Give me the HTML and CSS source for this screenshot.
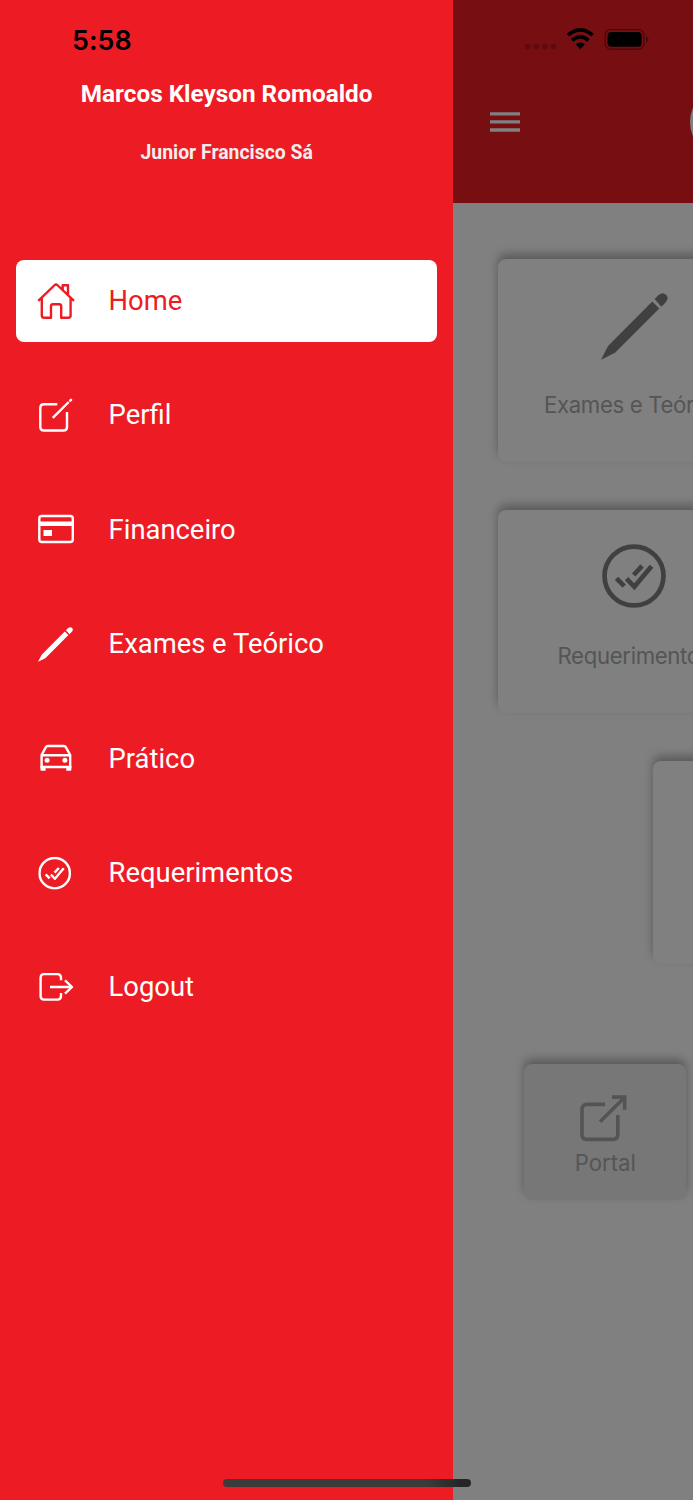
FILE: index.html
```html
<!DOCTYPE html>
<html lang="pt-BR">
<head>
<meta charset="utf-8">
<title>Menu</title>
<link rel="stylesheet" href="styles.css">
</head>
<body>
<svg class="defs" aria-hidden="true">
  <symbol id="pencil" viewBox="0 0 200 200"><path fill="currentColor" d="M0 199 21 158 153 25 174 46 42 178ZM160 18 172 6Q184-4 195 6 204 17 192 29L180 41Z"/></symbol>
  <symbol id="checks" viewBox="0 0 190 190"><g fill="none" stroke="currentColor" stroke-width="14"><circle cx="95" cy="95" r="87.5"/><path d="M43 102 66 125M73 103 96 127 147 66M94 92 119 65"/></g></symbol>
</svg>
<div class="screen">
  <aside class="drawer">
    <div class="time">5:58</div>
    <div class="name">Marcos Kleyson Romoaldo</div>
    <div class="unit">Junior Francisco Sá</div>
    <nav class="menu">
      <a class="item active"><svg class="icon" viewBox="0 0 40 40"><path d="M2.3 19.8 18.7 4Q20 2.9 21.3 4L38 19.8M26.7 8.8V4.2H32V14M5.8 17V34.5Q5.8 36.7 8 36.7H15V25Q15 23.2 17 23.2H23.2Q25.2 23.2 25.2 25V36.7H32.4Q34.6 36.7 34.6 34.5V17"/></svg><span>Home</span></a>
      <a class="item"><svg class="icon" viewBox="0 0 40 40"><path d="M21.3 9.3H8Q4.3 9.3 4.3 13V32Q4.3 35.5 8 35.5H27.5Q31 35.5 31 32V17M16.8 22.8 32.7 7"/><path d="M34.2 5.7 35 4.9" stroke-width="2.6" stroke-linecap="round"/></svg><span>Perfil</span></a>
      <a class="item"><svg class="icon" viewBox="0 0 40 40"><rect x="3.3" y="7" width="33.5" height="26" rx="2.5"/><path class="solid" d="M3 12.6H37V17H3ZM7.5 21H16V27H7.5Z"/></svg><span>Financeiro</span></a>
      <a class="item"><svg class="icon" viewBox="0 0 40 40"><use href="#pencil" x="2" y="3" width="35" height="35"/></svg><span>Exames e Teórico</span></a>
      <a class="item"><svg class="icon" viewBox="0 0 40 40"><path d="M5.6 29V17L9.6 9.6Q10.3 8 12.1 8H27.6Q29.4 8 30.1 9.6L34.2 17V29ZM5.6 17.2H34.2"/><path class="solid" d="M4.4 28H9.6V32.7H5.5Q4.4 32.7 4.4 31.5ZM30.3 28H35.4V31.5Q35.4 32.7 34.3 32.7H30.3Z"/><circle class="solid" cx="11.1" cy="22.3" r="2.5"/><circle class="solid" cx="28.9" cy="22.3" r="2.5"/></svg><span>Prático</span></a>
      <a class="item"><svg class="icon" viewBox="0 0 40 40"><use href="#checks" x="2.2" y="3.7" width="33" height="33"/></svg><span>Requerimentos</span></a>
      <a class="item"><svg class="icon" viewBox="0 0 40 40"><path d="M25 13.3V11Q25 7.1 21.5 7.1H8Q4.6 7.1 4.6 11V29.1Q4.6 32.6 8 32.6H21.5Q25 32.6 25 29.1V26M14 20H36M29 13.3 36 20 29 26.7"/></svg><span>Logout</span></a>
    </nav>
  </aside>
  <main class="page">
    <header class="topbar">
      <div class="status">
        <svg width="126" height="24" viewBox="0 0 126 24">
          <g fill="#5e0b0f"><circle cx="4.7" cy="18.6" r="2.9"/><circle cx="13.3" cy="18.6" r="2.9"/><circle cx="22" cy="18.6" r="2.9"/><circle cx="30.6" cy="18.6" r="2.9"/></g>
          <g fill="none" stroke="#000" stroke-width="3.6"><path d="M45 7.2Q57.3-3.3 69.6 7.2M49.2 12.3Q57.3 5.4 65.4 12.3"/></g>
          <path d="M52.8 16.3Q57.3 12.8 61.8 16.3L57.3 21.2Z"/>
          <rect x="82.1" y="1.7" width="39" height="19.4" rx="5.5" fill="none" stroke="#4b080c" stroke-width="1.3"/>
          <rect x="84.6" y="4.1" width="34" height="14.7" rx="3.5"/>
          <path d="M123 8Q125.4 9 125.4 11.3T123 14.7Z" fill="#4b080c"/>
        </svg>
      </div>
      <div class="row"><svg class="burger" width="30" height="20" viewBox="0 0 30 20"><path d="M0 1.9H30M0 9.9H30M0 18H30"/></svg><div class="avatar"></div></div>
    </header>
    <section class="cards">
      <div class="card"><svg class="pen"><use href="#pencil"/></svg><span>Exames e Teórico</span></div>
      <div class="card"><svg class="check"><use href="#checks"/></svg><span>Requerimentos</span></div>
      <div class="card shifted"></div>
      <div class="portal"><svg width="48" height="48" viewBox="0 0 48 48"><path d="M25 10.4H7Q2 10.4 2 15.4V40.5Q2 45.4 7 45.4H32.8Q37.8 45.4 37.8 40.5V21M20 27.8 44 4M32 3.1H44.7V15.8"/></svg><span>Portal</span></div>
    </section>
  </main>
  <div class="home-indicator"></div>
</div>
</body>
</html>
```
FILE: styles.css
```css
* { box-sizing: border-box; }
body { margin: 0; font-family: Roboto, sans-serif; }
.defs { position: absolute; width: 0; height: 0; }
.screen { position: relative; display: flex; width: 693px; height: 1500px; overflow: hidden; background: #808080; }
.drawer { flex: none; width: 453.3px; background: #ed1c24; color: #fff; }
.time { height: 34px; margin: 23px 0 0 72px; font: 600 26.8px/34px Inter, sans-serif; color: #000; letter-spacing: .1px; }
.name { margin-top: 20px; font-size: 24.3px; line-height: 34px; font-weight: 700; text-align: center; }
.unit { margin-top: 26.6px; font-size: 19.4px; line-height: 30px; font-weight: 700; text-align: center; color: #f2eeee; }
.menu { display: flex; flex-direction: column; gap: 32.4px; padding: 92.1px 16.3px 0; }
.item { display: flex; align-items: center; height: 82px; padding-left: 19.7px; border-radius: 8px; font-size: 27.4px; }
.item.active { background: #fff; color: #ed1c24; }
.item span { margin-left: 32.6px; padding-top: .6px; white-space: nowrap; }
.icon { flex: none; width: 40px; height: 40px; fill: none; stroke: currentColor; stroke-width: 2.4; stroke-linejoin: round; }
.icon use { stroke: none; }
.icon .solid { fill: currentColor; stroke: none; }
.page { flex: 1; min-width: 0; overflow: hidden; background: #808080; font-family: Inter, sans-serif; }
.topbar { height: 202.5px; background: #770e12; }
.status { height: 52px; padding: 28px 0 0 70px; }
.status svg { display: block; }
.row { display: flex; align-items: center; height: 140.6px; padding-left: 37px; }
.burger { flex: none; stroke: #808080; stroke-width: 3.4; }
.avatar { flex: none; width: 70px; height: 70px; margin-left: 169.3px; border-radius: 50%; background: #808080; }
.cards { padding: 56.3px 0 0 45px; }
.card, .portal { display: flex; flex-direction: column; align-items: center; border-radius: 8px; background: #808080; box-shadow: 0 -5px 10px rgba(0, 0, 0, .3); color: #555; font-size: 22.2px; letter-spacing: -.35px; white-space: nowrap; }
.card { width: 272px; height: 203px; margin-bottom: 48px; padding-top: 34px; }
.card svg { color: #404040; }
.card span { line-height: 30px; }
.pen { width: 67px; height: 67px; margin-bottom: 30px; }
.check { width: 64px; height: 64px; margin-bottom: 33px; }
.card.shifted { margin-left: 155px; }
.portal { width: 162px; height: 136px; margin: 100px 0 0 26px; padding-top: 30px; background: #777; letter-spacing: 0; }
.portal svg { position: relative; left: -1px; fill: none; stroke: #545454; stroke-width: 3.6; }
.portal span { margin-top: 6px; line-height: 30px; }
.home-indicator { position: absolute; left: 223px; bottom: 13px; width: 247.5px; height: 8px; border-radius: 4px; background: linear-gradient(90deg, #3b3b3b 82%, #252525 96%); }
```
